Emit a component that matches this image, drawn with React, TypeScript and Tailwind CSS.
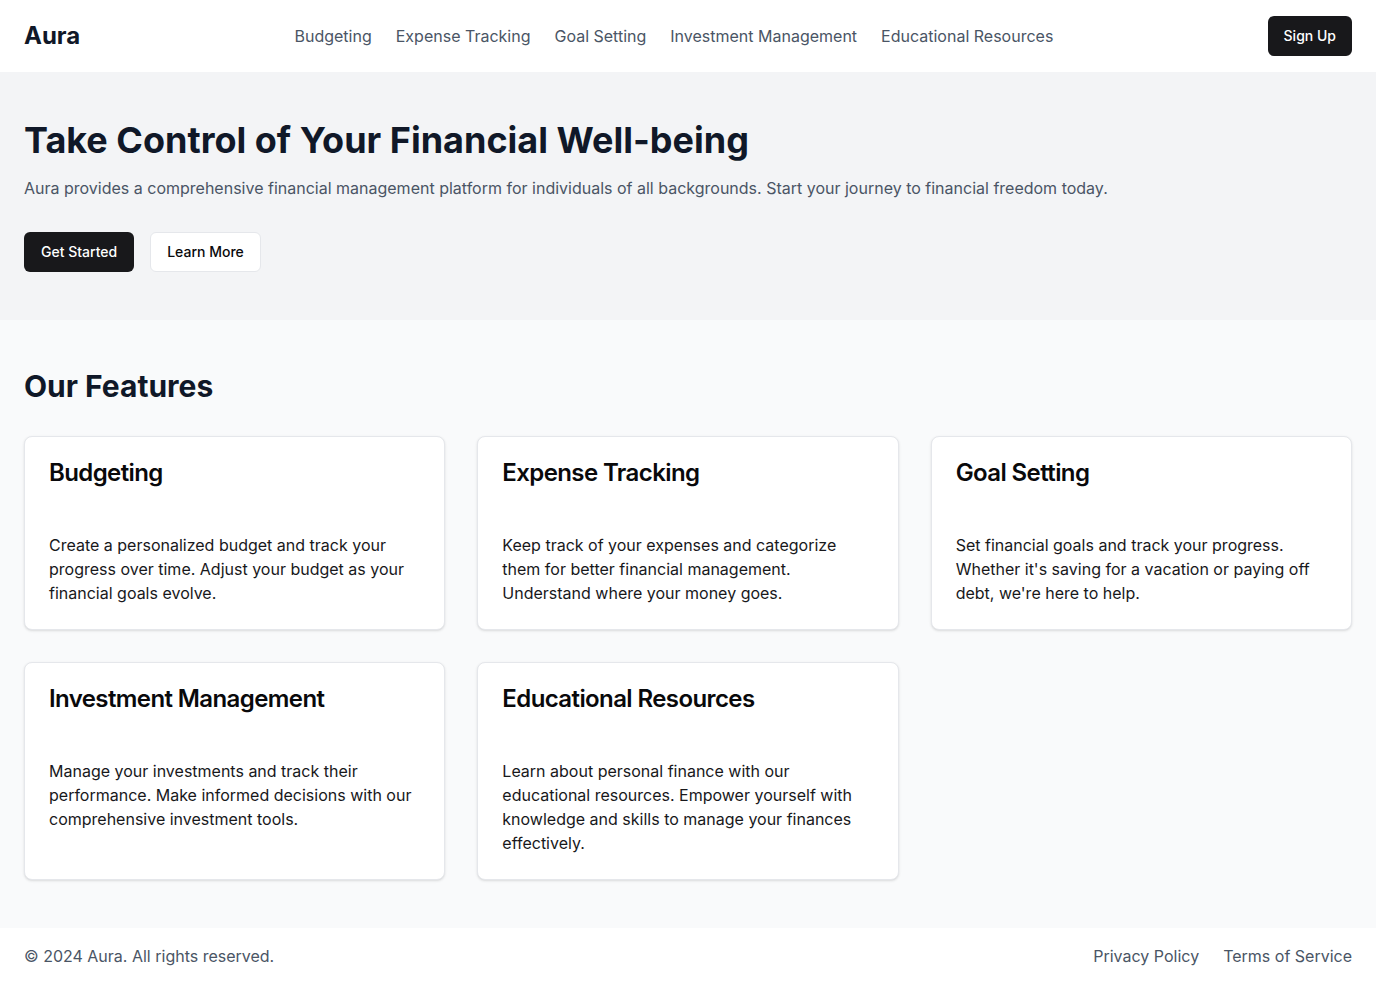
export default function App() {
  const navLinks = [
    "Budgeting",
    "Expense Tracking",
    "Goal Setting",
    "Investment Management",
    "Educational Resources",
  ];

  const features = [
    {
      title: "Budgeting",
      desc: "Create a personalized budget and track your progress over time. Adjust your budget as your financial goals evolve.",
    },
    {
      title: "Expense Tracking",
      desc: "Keep track of your expenses and categorize them for better financial management. Understand where your money goes.",
    },
    {
      title: "Goal Setting",
      desc: "Set financial goals and track your progress. Whether it's saving for a vacation or paying off debt, we're here to help.",
    },
    {
      title: "Investment Management",
      desc: "Manage your investments and track their performance. Make informed decisions with our comprehensive investment tools.",
    },
    {
      title: "Educational Resources",
      desc: "Learn about personal finance with our educational resources. Empower yourself with knowledge and skills to manage your finances effectively.",
    },
  ];

  return (
    <div className="min-h-screen bg-white font-['Inter',sans-serif]">
      <header className="flex items-center justify-between bg-white px-6 py-4">
        <a href="#" className="text-2xl font-bold text-gray-900">
          Aura
        </a>
        <nav className="flex items-center gap-6">
          {navLinks.map((link) => (
            <a key={link} href="#" className="text-base text-gray-600">
              {link}
            </a>
          ))}
        </nav>
        <button className="h-10 rounded-md bg-zinc-900 px-4 text-sm font-medium text-white">
          Sign Up
        </button>
      </header>

      <section className="bg-gray-100 px-6 py-12">
        <h1 className="text-4xl font-bold text-gray-900">
          Take Control of Your Financial Well-being
        </h1>
        <p className="mt-4 text-base text-gray-600">
          Aura provides a comprehensive financial management platform for
          individuals of all backgrounds. Start your journey to financial
          freedom today.
        </p>
        <div className="mt-8 flex gap-4">
          <button className="h-10 rounded-md bg-zinc-900 px-[17px] text-sm font-medium text-white">
            Get Started
          </button>
          <button className="h-10 rounded-md border border-gray-200 bg-white px-4 text-sm font-medium text-zinc-950">
            Learn More
          </button>
        </div>
      </section>

      <section className="bg-gray-50 px-6 py-12">
        <h2 className="mb-8 text-3xl font-bold text-gray-900">Our Features</h2>
        <div className="grid grid-cols-3 gap-8">
          {features.map((item) => (
            <div
              key={item.title}
              className="rounded-lg border border-gray-200 bg-white shadow-sm"
            >
              <div className="p-6 pb-12">
                <h3 className="text-2xl leading-none font-semibold tracking-tight text-zinc-950">
                  {item.title}
                </h3>
              </div>
              <div className="px-6 pb-6">
                <p className="text-base text-zinc-900">{item.desc}</p>
              </div>
            </div>
          ))}
        </div>
      </section>

      <footer className="flex items-center justify-between bg-white px-6 py-4">
        <p className="text-base text-gray-600">
          © 2024 Aura. All rights reserved.
        </p>
        <div className="flex gap-6">
          <a href="#" className="text-base text-gray-600">
            Privacy Policy
          </a>
          <a href="#" className="text-base text-gray-600">
            Terms of Service
          </a>
        </div>
      </footer>
    </div>
  );
}
